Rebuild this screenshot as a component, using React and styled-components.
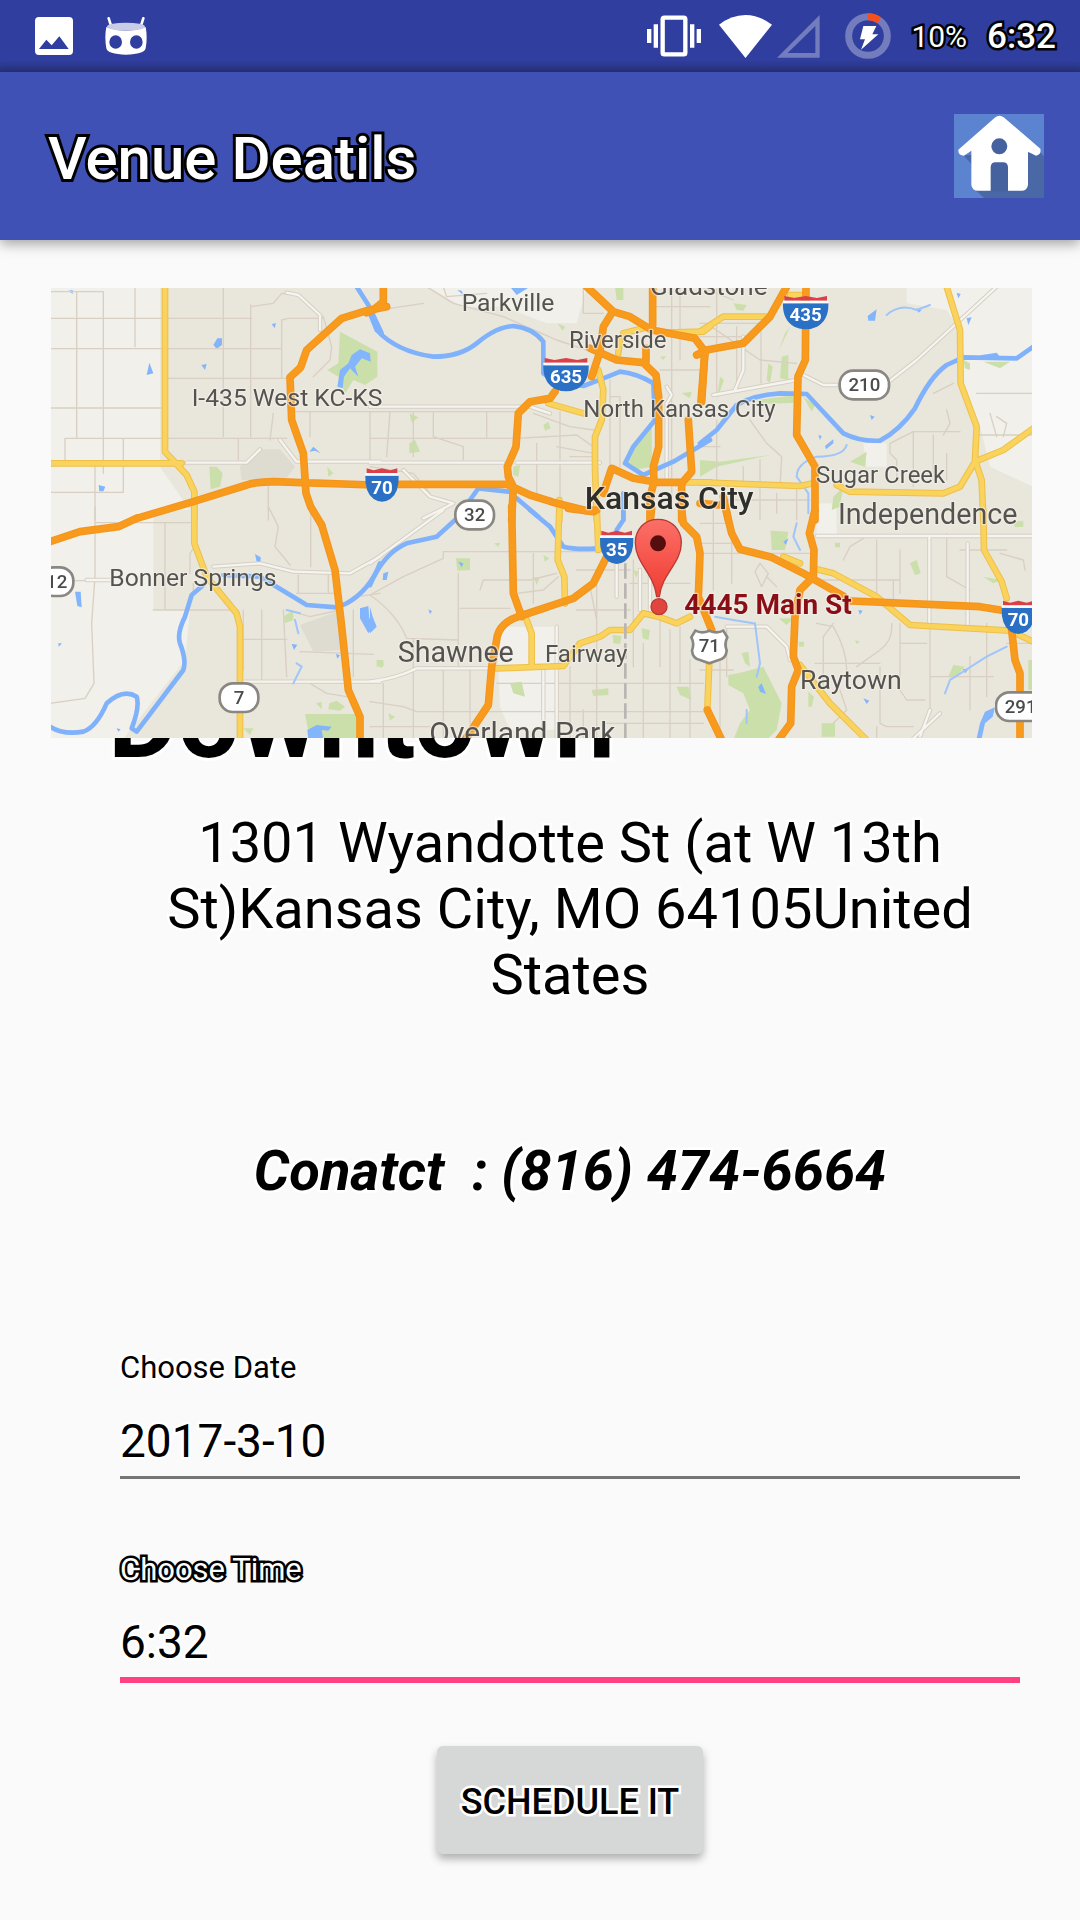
import React from "react";
import styled, { createGlobalStyle, css } from "styled-components";

const GlobalStyle = createGlobalStyle`
  *, *::before, *::after { box-sizing: border-box; }
  body {
    margin: 0;
    background: #fafafa;
    color: #000;
    font-family: Roboto, "Liberation Sans", sans-serif;
  }
`;

const outline = (color, width) => css`
  -webkit-text-stroke: ${width}px ${color};
  paint-order: stroke fill;
  stroke-linejoin: round;
`;

const Screen = styled.div`
  min-height: 100vh;
  display: flex;
  flex-direction: column;
`;

const StatusBar = styled.div`
  height: 72px;
  padding: 0 24px 0 35px;
  display: flex;
  align-items: center;
  justify-content: space-between;
  background: linear-gradient(#303f9f 84%, #2b3788 94%, #28327a);
  color: #fff;
`;

const IconGroup = styled.div`
  display: flex;
  align-items: center;
  gap: ${({ $gap }) => $gap}px;
`;

const Glyph = styled.svg`
  display: block;
  flex: none;
  width: ${({ $w }) => $w}px;
  height: ${({ $h }) => $h}px;
`;

const BatteryText = styled.span`
  padding-top: 2px;
  font-size: 30px;
  line-height: 36px;
  ${outline("#000", 5)}
`;

const Clock = styled.span`
  padding-top: 2px;
  font-size: 35px;
  line-height: 36px;
  font-weight: 500;
  ${outline("#000", 5)}
`;

const AppBar = styled.header`
  height: 168px;
  padding: 0 36px 0 48px;
  display: flex;
  align-items: center;
  justify-content: space-between;
  background: #3f51b5;
  box-shadow: 0 4px 12px rgba(0, 0, 0, 0.35);
`;

const Title = styled.h1`
  margin: 0;
  padding-top: 6px;
  color: #fff;
  font-size: 60px;
  line-height: 72px;
  font-weight: 500;
  ${outline("#000", 6)}
`;

const HomeButton = styled.button`
  padding: 0;
  border: 0;
  background: none;
`;

const Content = styled.main`
  padding: 48px 48px 60px 51px;
  display: flex;
  flex-direction: column;
`;

const MapImage = styled.svg`
  display: block;
  position: relative;
  z-index: 1;
  width: 100%;
  height: auto;
  font-family: Roboto, "Liberation Sans", sans-serif;
`;

const Details = styled.section`
  padding-left: 57px;
  display: flex;
  flex-direction: column;
`;

const VenueName = styled.h2`
  margin: -66px 0 42px;
  font-size: 108px;
  line-height: 96px;
  font-weight: 700;
  ${outline("#fff", 6)}
`;

const Address = styled.p`
  margin: 0 0 130px;
  font-size: 56px;
  line-height: 66px;
  text-align: center;
  ${outline("#fff", 5)}
`;

const Contact = styled.p`
  margin: 0 0 144px;
  font-size: 56px;
  line-height: 66px;
  font-weight: 700;
  font-style: italic;
  text-align: center;
  white-space: pre;
  ${outline("#fff", 5)}
`;

const Form = styled.form`
  padding: 0 12px;
  display: flex;
  flex-direction: column;
`;

const Field = styled.div`
  display: flex;
  flex-direction: column;
  margin-bottom: ${({ $last }) => ($last ? 63 : 71)}px;
`;

const Label = styled.label`
  font-size: 31px;
  line-height: 40px;
  color: ${({ $active }) => ($active ? "#fff" : "#000")};
  ${({ $active }) => ($active ? outline("#000", 5) : outline("#fff", 5))}
`;

const Input = styled.input`
  width: 100%;
  padding: 24px 0 7px;
  border: 0;
  border-bottom: ${({ $active }) => ($active ? "6px solid #ff4081" : "3px solid #757575")};
  border-radius: 0;
  outline: none;
  background: transparent;
  color: #000;
  font-family: inherit;
  font-size: 46px;
  line-height: 56px;
  height: ${({ $active }) => ($active ? 93 : 91)}px;
  ${outline("#fff", 5)}
`;

const SubmitButton = styled.button`
  align-self: center;
  min-width: 266px;
  height: 108px;
  padding: 4px 24px 0;
  border: 0;
  border-radius: 6px;
  background: #d6d8d7;
  box-shadow: 0 5px 8px rgba(0, 0, 0, 0.3);
  color: #000;
  font-family: inherit;
  font-size: 36px;
  line-height: 42px;
  font-weight: 500;
  ${outline("#fff", 5)}
`;

/* ---------- icons ---------- */

const PictureIcon = () => (
  <Glyph $w={38} $h={38} viewBox="0 0 114 114">
    <path
      fill="#fff"
      fillRule="evenodd"
      d="M12 0H102Q114 0 114 12V102Q114 114 102 114H12Q0 114 0 102V12Q0 0 12 0ZM12 96H101L73 58L50 85L34 68Z"
    />
  </Glyph>
);

const DroidIcon = () => (
  <Glyph $w={42} $h={38} viewBox="0 0 126 114">
    <path d="M11 4L18 26M115 4L108 26" stroke="#fff" strokeWidth="8" strokeLinecap="round" />
    <path
      fill="#fff"
      fillRule="evenodd"
      d="M4 30Q62 52 122 30Q128 60 122 94Q118 112 63 113Q8 112 4 94Q-2 60 4 30ZM32 55A19 20 0 1 0 32 95A19 20 0 1 0 32 55ZM94 55A19 20 0 1 0 94 95A19 20 0 1 0 94 55Z"
    />
    <ellipse cx="63" cy="29" rx="57" ry="12" fill="#c9cce6" />
  </Glyph>
);

const VibrateIcon = () => (
  <Glyph $w={54} $h={42} viewBox="0 0 162 126">
    <rect x="47" y="8" width="68" height="110" rx="5" fill="none" stroke="#fff" strokeWidth="13" />
    <path fill="#fff" d="M0 42h13v42H0zM20 28h13v70H20zM129 28h13v70h-13zM149 42h13v42h-13z" />
  </Glyph>
);

const WifiIcon = () => (
  <Glyph $w={53} $h={43} viewBox="0 0 159 129">
    <path fill="#fff" d="M0 29Q36 1 79.500 0Q123 1 159 29L79.500 129Z" />
  </Glyph>
);

const SignalIcon = () => (
  <Glyph $w={43} $h={43} viewBox="0 0 129 129">
    <path fill="#737cbd" fillRule="evenodd" d="M128 0V128H0ZM115 33L32 114H115Z" />
  </Glyph>
);

const BatteryIcon = () => (
  <Glyph $w={46} $h={46} viewBox="0 0 138 138">
    <circle cx="69" cy="69" r="58" fill="none" stroke="#737cbd" strokeWidth="21" />
    <path d="M69 11A58 58 0 0 1 103 22" fill="none" stroke="#f4511e" strokeWidth="21" />
    <path fill="#fff" d="M55 39H94L82 64H100L48 110L60 79H45Z" />
  </Glyph>
);

const HomeIcon = () => (
  <Glyph $w={90} $h={84} viewBox="0 0 270 252">
    <path fill="#5c83cf" d="M0 0H270V252H0Z" />
    <path fill="#4a68a5" d="M258 115L270 127V252H90L62 226L52 150L28 124Z" />
    <path fill="#45629f" d="M100 70H172V232H100Z" />
    <path
      fill="#fff"
      fillRule="evenodd"
      d="M124 10Q136 1 149 10L259 104Q263 122 246 125L222 113V212Q220 230 202 230H162V158Q160 145 148 145H124Q112 145 110 158V230H72Q54 230 52 212V110L30 125Q12 124 13 107ZM136 73A24 24 0 1 0 136 121A24 24 0 1 0 136 73Z"
    />
  </Glyph>
);

/* ---------- map ---------- */

/* The map is drawn on six sheets: three across, two down, 990 x 690 units each. */
const SHEETS = [
  {
    at: [0, 0],
    land: ["M30 20H360V560L450 690H30Z"],
    shade: ["M600 560L660 508H720L765 560L735 600H605Z"],
    parks: [
      "M900 155L1012 215V290L975 315L940 300L915 340L895 290L862 270L895 250Z",
      "M508 560H530L548 580L540 620L512 628Z",
      "M862 560L880 580L865 590Z",
    ],
    lakes: [
      "M520 195L532 175H546V195L530 206Z",
      "M320 285L328 248L340 280Z",
      "M484 255L500 252L495 270Z",
      "M176 615L196 620L190 634H178Z",
      "M892 320L900 270L925 250L935 225L960 208L990 220L992 245L965 235L945 260L955 290L930 265L912 290L908 325Z",
      "M808 515L820 500L842 520L825 512Z",
      "M86 32L98 30V42Z",
      "M695 132L708 130L704 145Z",
    ],
    minor: [
      "M30 35L190 35V580M110 35V472M285 20V200M30 115H635M30 206H725M380 295H750M30 384H365M550 20V470M632 75V470M75 475H740M75 475V540M595 475V540M250 475V635M30 637H250M165 560V720M725 120V295M725 120L745 115H850M632 80L700 70L725 40L770 45L850 110L875 200L870 240L820 290M765 395H1020M990 395V540M700 400L690 480M810 395V470M685 610V720",
    ],
    white: ["M440 548H620L660 508M720 480L770 545H1020M740 38L775 45L840 105V150"],
    rivers: ["M950 20L985 75L1025 160"],
    yellow: ["M375 20V515L440 585L463 635V720", "M30 550H425"],
    orange: [
      "M1040 80L980 92L905 115L800 210L782 262L750 292L755 420L790 520L798 640L812 680L845 735",
      "M290 715L460 665L620 615Q640 607 700 605L1000 615",
    ],
  },
  {
    at: [990, 0],
    land: ["M170 20H650L620 130H530L400 80H280Z"],
    shade: ["M800 480L845 440V530L820 540Z"],
    parks: [
      "M0 210L20 230V290L0 300Z",
      "M118 400L145 412L125 428Z",
      "M118 490L135 480L150 515L118 520Z",
      "M735 20H760V60H740Z",
      "M765 540L845 430V560L790 570Z",
      "M520 435L535 425L542 445L525 452Z",
      "M562 130L585 140L578 152Z",
      "M430 560L450 555L445 590L430 585Z",
      "M935 340L965 335L960 355Z",
      "M870 230L888 228L880 240Z",
    ],
    lakes: ["M420 20H480L440 45Z", "M262 30L275 32L280 45Z"],
    minor: [
      "M0 395H440M60 395L50 530M130 395V530M190 395V470L280 500V540M350 395V475M0 475H430M440 475L620 465L670 500M570 395V660M490 400L600 440L670 450M170 20L250 70L400 110L560 180L650 210M905 20V690M930 20V240M860 80H1020M870 270H990M0 560L130 580L180 640M720 300V560M500 490V650M560 500L670 520M220 20L230 50L350 40M640 20V100H700M600 530H670V620M720 350H750V560M0 85H60L160 70",
    ],
    white: ["M0 380H480L540 400M0 548H400M440 548H690M890 320L905 345L890 370V600M100 570L180 650L250 670L160 715"],
    rivers: [
      "M0 100L20 150Q80 215 190 230Q270 230 320 190Q380 140 430 138Q490 145 520 185V280Q560 310 640 318L700 295L750 275Q800 280 850 310L855 420L790 500L765 550L820 585L910 545L1020 480",
      "M300 660L325 625L415 635M440 655L505 710M760 640V720",
    ],
    yellow: [
      "M535 370L640 400M685 270L700 330L695 420L675 470V560L680 720M750 180L745 220M760 160L820 145",
      "M890 158L1000 155L1020 140M568 660V720M935 607H1020",
    ],
    orange: [
      "M40 20V65L10 90L-10 98",
      "M50 613H410L480 645L560 670L650 692L680 690",
      "M650 20L730 95L780 110L845 150L975 175L1005 215L993 365",
      "M848 20V135M725 100L700 140L690 215L665 290",
      "M660 205L740 240L820 248L858 285L866 350V500L850 560L852 605M828 205V245",
      "M555 335L540 355L480 365L445 400L438 500L412 560L415 590L430 620L425 720",
      "M955 420L965 575L935 610V720M700 640L725 565L790 595L860 607H935M852 607L840 650V720",
    ],
  },
  {
    at: [1980, 0],
    land: ["M620 20H1000V620L870 560L840 440L790 310L780 150L740 90L620 70Z", "M490 490H560V560H500Z"],
    shade: [],
    parks: [
      "M245 230L265 225V300L240 295Z",
      "M205 250L218 260L210 310L200 300Z",
      "M170 360L290 345V368L190 372Z",
      "M310 350L345 375L335 395Z",
      "M450 545L500 515L495 560Z",
      "M850 245L930 245L900 265Z",
      "M790 240L810 250V270L795 265Z",
      "M0 540L60 545L210 525L50 560L0 590Z",
      "M400 650L430 620L420 680L395 690Z",
      "M270 140L235 215L255 160Z",
      "M100 70L140 75L130 92L110 90Z",
      "M60 290L72 300L50 360Z",
    ],
    lakes: [
      "M503 108L530 88L525 122H505Z",
      "M770 38L782 42L775 55Z",
      "M800 115L815 112L805 135Z",
      "M375 498L400 478V490L378 508Z",
      "M510 405L524 410L515 420Z",
      "M355 465L365 468L360 480Z",
      "M650 85L665 90L655 98Z",
      "M840 226L890 218L900 230H850Z",
    ],
    minor: [
      "M50 20V340M110 140V330M183 130V310M0 130H200M0 170H130M830 465H1000M830 340H1000M740 390L750 430L730 465M570 490L640 455H780M570 490V520L590 540V600M640 455V620M700 465V600M760 310L700 340M870 400L890 470M890 410L920 430L910 470M740 520V600M150 420L200 490L245 530L240 620M50 420V600M130 560V610M180 540V720M0 500H60M60 660H330M0 20L100 60M230 640V700M290 630V720M20 130L180 240L290 250",
    ],
    white: ["M40 345L290 300M310 285L370 315H410M560 310L650 240L890 20M130 170V270L105 330"],
    rivers: [
      "M0 490L50 450L110 375Q160 345 240 340L320 342L430 460Q480 485 540 482Q600 450 645 385Q690 290 740 255L790 232L950 235L1000 200",
    ],
    stream: ["M560 105Q600 70 650 90L690 75M440 495Q430 530 350 530Q290 550 290 590L325 640V700"],
    yellow: [
      "M0 155L70 110H210",
      "M740 20L780 150L782 310L830 440L825 540L845 600L850 720",
      "M825 545L910 510L1000 445M825 545L780 620L730 640L450 635L410 615M0 607L300 618L340 610M270 45H310",
    ],
    orange: [
      "M260 20L210 110L130 190L20 210L-10 225M15 210L5 365",
      "M318 20L316 240L294 290L290 465L345 560V720M70 650L85 720M0 670L60 675",
    ],
  },
  {
    at: [0, 690],
    land: ["M30 -20H340V300H450L435 450L240 700H30Z"],
    shade: ["M780 345L890 305L905 420L820 425Z"],
    parks: [
      "M795 612H960V690H810Z",
      "M868 580L890 572L915 590L900 602L865 598Z",
      "M828 580L845 575V598Z",
      "M730 320L760 300V330L735 340Z",
      "M610 655L640 655L630 675Z",
      "M1010 450H1030V470H1010Z",
    ],
    lakes: [
      "M805 690L802 660L830 645L875 650L865 662L845 660L850 690Z",
      "M105 245L122 245L125 292L112 288Z",
      "M960 295L985 288L988 325L1008 345L985 370L960 325Z",
      "M645 132L662 142V160L650 155Z",
      "M755 402L772 404L762 420Z",
      "M55 400L66 400L56 410Z",
      "M230 655L242 658L235 665Z",
      "M888 432L900 436L892 446Z",
    ],
    minor: [
      "M165 -10V200L155 340L162 520L135 565L30 580M165 38H460M375 40V300M340 300H595M610 300V480M665 300V510M730 300L740 500M610 388H740M685 -10L715 50L705 110L750 165M812 -10V170M740 300L810 320L900 300M780 425L1000 433M810 520L860 550L920 560M775 195V250M865 190V250M770 250H880M940 300V500M450 190V130L470 100M460 250V220M950 260L1020 250M100 212H210",
    ],
    white: ["M520 170L660 160L760 185L930 190L1020 140M610 515H1020M140 210H210"],
    rivers: [
      "M30 650Q70 675 130 665Q170 650 200 580Q250 535 290 560Q300 590 275 655L290 665L430 480Q440 450 420 400Q410 370 435 320L455 255L490 225",
      "M550 195L660 200L800 285L890 292L920 280Q990 240 1020 160",
    ],
    stream: ["M765 330L775 370M770 460L785 470L760 520M740 300L780 310"],
    yellow: ["M463 -10V100L500 200L590 310L600 350V690"],
    orange: ["M30 95L120 65L235 50L290 25", "M845 45L885 180L905 350L925 540L960 620V700"],
  },
  {
    at: [990, 690],
    land: ["M380 350H560V660H420L390 590Z"],
    shade: [],
    parks: [
      "M258 145H300V180L262 182Z",
      "M372 100L390 98L385 110Z",
      "M520 135L538 145L525 155Z",
      "M420 520L455 515L465 560L430 550Z",
      "M665 540L715 535V555L670 558Z",
      "M20 455L42 460L35 475Z",
      "M728 375L755 378L750 402L730 400Z",
      "M815 355L840 360L835 390L818 385Z",
      "M920 530L955 530L965 570L930 555Z",
      "M55 610L75 620L60 632Z",
      "M790 180L805 185L798 205Z",
      "M490 200L508 205L500 225Z",
    ],
    lakes: [
      "M0 290L8 320L20 350L0 370Z",
      "M40 190L55 185L50 210H38Z",
      "M265 155L280 160L275 172Z",
      "M175 298L186 304L180 312Z",
    ],
    minor: [
      "M0 255L100 200L220 145V125H680M265 190V470M270 295H420M330 240L340 210L480 210L560 190M0 255Q80 310 110 385L265 390M130 390V690M220 470V690M40 520V690M0 575L100 590L140 605H1000M300 470V640M0 650H180M380 520H1000M490 130V280M440 250L520 240L565 200M600 470V690M640 600V690M680 180V690M820 400V690M900 360V690M780 220H960M790 150V470M620 300H780M620 180H780M960 450V690M700 640H1000M870 330V470M930 350V520M660 230L680 330",
    ],
    white: ["M0 160L220 0M0 515Q80 505 140 475H360M520 480V690M560 350V690M740 150V260M810 180V300M840 170V300"],
    rivers: ["M0 225Q40 130 110 100L200 80L255 30", "M480 0L540 50L580 110Q620 120 680 115M760 -5V30L740 60"],
    yellow: [
      "M568 -10L563 150L583 200L585 280M680 -10L685 120M470 330L485 370V470",
      "M380 475L580 468L630 400L690 380L720 360L780 360L820 310L865 320L920 340L960 320",
    ],
    orange: [
      "M425 -10L430 250L455 320",
      "M710 140L670 220L610 265L460 315Q385 335 380 390L365 470L355 585L285 690",
      "M595 -5L670 5M845 -5L840 40",
      "M935 0L940 40L980 80L990 130L985 260L1025 360",
    ],
  },
  {
    at: [1980, 690],
    land: ["M350 -20H410V80H350Z"],
    shade: [],
    parks: [
      "M212 62L265 65L255 120H215Z",
      "M115 490L190 470L245 580L230 660L200 690H100L120 640L150 600L130 550L85 525V495Z",
      "M365 640H405V680H365Z",
      "M760 465L795 470L760 508L745 500Z",
      "M630 160L650 150L662 190L645 195Z",
      "M125 430L145 425L150 470L135 460Z",
      "M325 545L342 560L335 590L325 590Z",
      "M940 35L970 32V50L945 52Z",
      "M985 450H1000V540H985Z",
      "M405 98L420 98V112H405Z",
      "M295 395H312V410H298Z",
      "M465 390L480 395L470 402Z",
      "M850 200L905 210L880 220Z",
      "M795 310L805 325L798 330Z",
      "M235 325H280L260 345Z",
    ],
    lakes: [
      "M175 530L185 520L198 552L180 545Z",
      "M830 685L840 640L855 605L885 592L878 620L855 640L845 685Z",
      "M490 565L508 572L500 582Z",
      "M475 300L488 302L480 314Z",
      "M788 478L808 475L795 490Z",
      "M250 95L265 85L258 105Z",
    ],
    minor: [
      "M40 0V240M95 60V220M0 40H90M0 100H110M0 130H330M430 150L450 110L490 85M530 90V250M580 210V290M600 120V250M350 210H600M350 340L400 350Q440 420 440 480M575 340Q580 390 540 420L470 470M370 380V540M370 380L400 340M345 460H540M540 470V640L560 650H640M600 340V540L620 570H675M690 340V600L670 640M690 500H880M740 70V200L810 240M810 440V600M860 340V560M780 120H920M900 130L970 150L975 180M920 400H1000M600 400H680M420 540L440 600L400 640M530 650V690M80 350V500M0 480H100M60 450V690M200 200L230 230M165 185L180 160L205 190L185 230Z",
    ],
    white: ["M350 78H1000M688 80V340M803 100V345M80 350H200L260 410L270 450M635 690L720 610M690 600L660 680"],
    rivers: [],
    stream: ["M290 40L280 80L300 120M165 340L180 460L170 500M735 550L750 510L860 440L920 410M45 320L100 330L160 340M140 600V640"],
    yellow: [
      "M250 140L300 160M350 178L400 190L530 260L630 345L930 362L1000 395",
      "M850 0L852 120L905 215L920 265",
      "M28 450L22 600",
      "M300 465L390 580L500 690",
    ],
    orange: [
      "M78 0L95 70L120 118L215 142L310 190L430 258M455 273L840 290L920 303",
      "M345 0L328 70L342 120L340 200L300 240L285 320L280 440L295 480L275 530L272 640L235 690",
      "M22 600L65 690M935 360L945 450L960 490V690",
    ],
  },
];

const STROKES = [
  ["minor", "#d9cfc3", 4],
  ["white", "#d5d0c6", 13],
  ["white", "#f6f4ee", 7],
  ["stream", "#9fc5fb", 6],
  ["rivers", "#80b2fb", 14],
  ["yellow", "#eebf4b", 20],
  ["yellow", "#f9d35b", 14],
  ["orange", "#f2951c", 23],
  ["orange", "#f89a1e", 17],
];

const FILLS = [
  ["land", "#f1f0ea"],
  ["shade", "#dedbd1"],
  ["parks", "#cbdfab"],
  ["lakes", "#82b5fc"],
];

const PLACES = [
  ["I-435 West KC-KS", 455, 378, 74],
  ["Parkville", 1265, 92, 74],
  ["Riverside", 1587, 203, 72],
  ["North Kansas City", 1630, 410, 72],
  ["Gladstone", 1830, 45, 78],
  ["Sugar Creek", 2328, 610, 72],
  ["Independence", 2394, 732, 86],
  ["Bonner Springs", 208, 917, 74],
  ["Shawnee", 1073, 1147, 86],
  ["Fairway", 1515, 1145, 72],
  ["Overland Park", 1168, 1388, 90],
  ["Raytown", 2280, 1227, 80],
];

const INTERSTATES = [
  ["70", 1026, 615, 100],
  ["635", 1578, 284, 136],
  ["435", 2297, 98, 136],
  ["35", 1730, 802, 100],
  ["70", 2935, 1012, 100],
];

const ROUTES = [
  ["32", 1304, 705, 116],
  ["210", 2473, 315, 148],
  ["12", 50, 905, 100],
  ["7", 597, 1253, 116],
  ["291", 2942, 1280, 148],
];

function Interstate({ label, x, y, w }) {
  const h = w / 2;
  return (
    <g transform={`translate(${x} ${y})`}>
      <path d={`M${-h} -28H${h}Q${h + 2} 22 ${h / 2} 42Q0 58 ${-h / 2} 42Q${-h - 2} 22 ${-h} -28Z`} fill="#2c6fc4" />
      <path d={`M${-h + 4} -50L${-h / 2} -44L0 -50L${h / 2} -44L${h - 4} -50V-36H${-h + 4}Z`} fill="#db4148" />
      <path d={`M${-h} -32H${h}`} stroke="#fff" strokeWidth="7" />
      <text y="26" textAnchor="middle" fontSize="56" fontWeight="700" fill="#fff">{label}</text>
    </g>
  );
}

function Route({ label, x, y, w }) {
  return (
    <g transform={`translate(${x} ${y})`}>
      <rect x={-w / 2} y="-43" width={w} height="86" rx="40" fill="#fff" stroke="#8a8782" strokeWidth="8" />
      <text y="19" textAnchor="middle" fontSize="56" fontWeight="500" fill="#4c4c4c">{label}</text>
    </g>
  );
}

function VenueMap() {
  return (
    <MapImage viewBox="33 24 2943 1350" role="img" aria-label="Map of Kansas City">
      <defs>
        <linearGradient id="pin" x1="0" y1="0" x2="0" y2="1">
          <stop offset="0" stopColor="#fb7067" />
          <stop offset="1" stopColor="#f03c32" />
        </linearGradient>
        <filter id="soft" filterUnits="userSpaceOnUse" x="0" y="0" width="3000" height="1400">
          <feGaussianBlur stdDeviation="2" />
        </filter>
      </defs>
      <g filter="url(#soft)">
        <rect width="3000" height="1400" fill="#e9e6dc" />
        {FILLS.map(([kind, color]) => (
          <g key={kind} fill={color}>
            {SHEETS.map((s, i) => (
              <path key={i} transform={`translate(${s.at.join(" ")})`} d={s[kind].join("")} />
            ))}
          </g>
        ))}
        {STROKES.map(([kind, color, width]) => (
          <g key={kind + color} fill="none" stroke={color} strokeWidth={width} strokeLinejoin="round" strokeLinecap="round">
            {SHEETS.map((s, i) =>
              s[kind] ? <path key={i} transform={`translate(${s.at.join(" ")})`} d={s[kind].join("")} /> : null
            )}
          </g>
        ))}
        <path d="M1756 850V1374" stroke="#b9b5b3" strokeWidth="8" strokeDasharray="46 14" />
        {INTERSTATES.map(([label, x, y, w]) => (
          <Interstate key={`${label}-${x}`} label={label} x={x} y={y} w={w} />
        ))}
        {ROUTES.map(([label, x, y, w]) => (
          <Route key={label} label={label} x={x} y={y} w={w} />
        ))}
        <path
          d="M1966 1052Q1986 1062 2008 1052Q2030 1062 2050 1052L2062 1072Q2052 1090 2060 1112Q2058 1136 2036 1140L2008 1150L1980 1140Q1958 1136 1956 1112Q1964 1090 1954 1072Z"
          fill="#fff"
          stroke="#8a8782"
          strokeWidth="8"
        />
        <text x="2008" y="1117" textAnchor="middle" fontSize="56" fontWeight="500" fill="#4c4c4c">71</text>
        <g fill="#55534f" stroke="#f3f1eb" strokeWidth="8" strokeOpacity="0.6" strokeLinejoin="round" paintOrder="stroke">
          {PLACES.map(([name, x, y, size]) => (
            <text key={name} x={x} y={y} fontSize={size}>{name}</text>
          ))}
          <text x="1634" y="687" fontSize="96" fontWeight="500" fill="#2f2d2b">Kansas City</text>
          <text x="1933" y="1003" fontSize="84" fontWeight="700" fill="#8b1019">4445 Main St</text>
        </g>
        <circle cx="1857" cy="980" r="24" fill="#e0453f" stroke="#b83a35" strokeWidth="4" />
        <path
          d="M1854 718C1812 718 1786 750 1786 788C1786 850 1842 880 1850 950H1858C1866 880 1924 850 1924 788C1924 750 1896 718 1854 718Z"
          fill="url(#pin)"
          stroke="#b83a35"
          strokeWidth="4"
        />
        <circle cx="1854" cy="790" r="24" fill="#571010" />
      </g>
    </MapImage>
  );
}

export default function App() {
  return (
    <Screen>
      <GlobalStyle />
      <StatusBar>
        <IconGroup $gap={32}>
          <PictureIcon />
          <DroidIcon />
        </IconGroup>
        <IconGroup $gap={25}>
          <IconGroup $gap={18}>
            <VibrateIcon />
            <IconGroup $gap={5}>
              <WifiIcon />
              <SignalIcon />
            </IconGroup>
          </IconGroup>
          <IconGroup $gap={20}>
            <BatteryIcon />
            <BatteryText>10%</BatteryText>
            <Clock>6:32</Clock>
          </IconGroup>
        </IconGroup>
      </StatusBar>
      <AppBar>
        <Title>Venue Deatils</Title>
        <HomeButton type="button" aria-label="Home">
          <HomeIcon />
        </HomeButton>
      </AppBar>
      <Content>
        <VenueMap />
        <Details>
          <VenueName>Downtown</VenueName>
          <Address>1301 Wyandotte St (at W 13th St)Kansas City, MO 64105United States</Address>
          <Contact>{"Conatct  : (816) 474-6664"}</Contact>
          <Form onSubmit={(e) => e.preventDefault()}>
            <Field>
              <Label htmlFor="date">Choose Date</Label>
              <Input id="date" type="text" defaultValue="2017-3-10" />
            </Field>
            <Field $last>
              <Label htmlFor="time" $active>Choose Time</Label>
              <Input id="time" type="text" defaultValue="6:32" $active />
            </Field>
            <SubmitButton type="submit">SCHEDULE IT</SubmitButton>
          </Form>
        </Details>
      </Content>
    </Screen>
  );
}
